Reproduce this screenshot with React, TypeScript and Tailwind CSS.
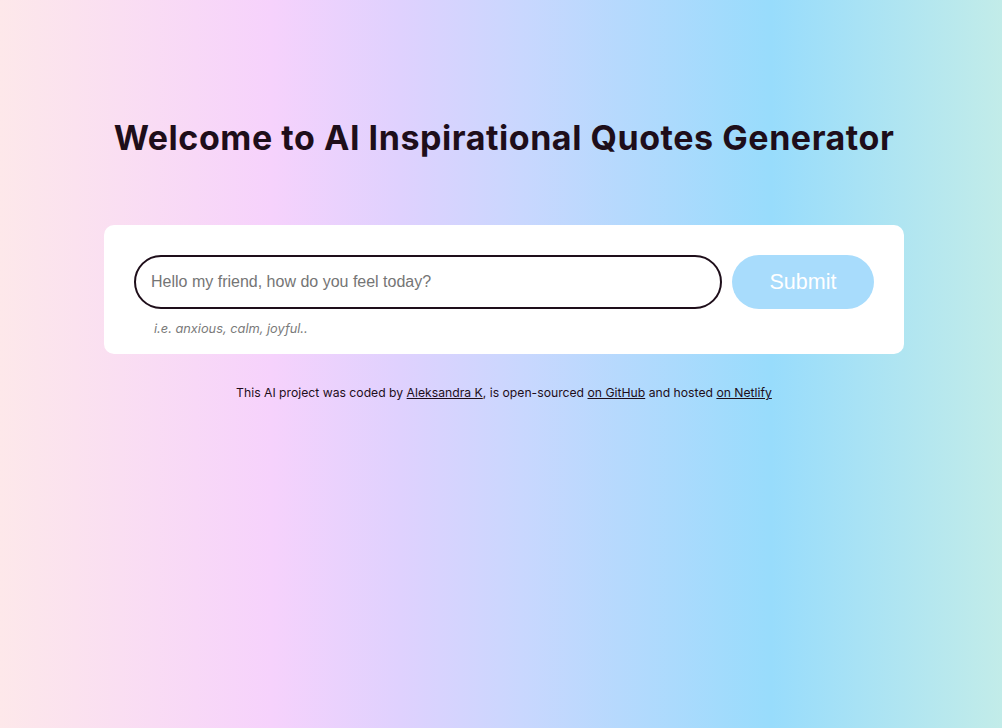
import React from "react";

export default function App() {
  return (
    <div className="min-h-screen w-full bg-[linear-gradient(90deg,#fde8ea_0%,#f6d2fc_27%,#dfd1fe_40%,#c9d7fe_52%,#98dcfc_77%,#c2ece9_100%)] pl-[6px] font-['Inter','Noto_Sans',sans-serif] text-[#1e0e1a]">
      <div className="mx-auto flex w-[800px] flex-col items-center pt-[116px]">
        <h1 className="whitespace-nowrap text-[34px] font-bold leading-[44px] tracking-[0.55px]">
          Welcome to AI Inspirational Quotes Generator
        </h1>

        {/* Form Card */}
        <div className="mt-[65px] w-full rounded-[10px] bg-white px-[30px] pt-[30px] pb-[16px]">
          <form className="flex items-center gap-[10px]" onSubmit={(e) => e.preventDefault()}>
            <input
              type="text"
              placeholder="Hello my friend, how do you feel today?"
              className="h-[54px] flex-1 rounded-full border-2 border-[#1e0e1a] bg-white px-[15px] font-['Liberation_Sans',Arial,sans-serif] text-[16px] text-[#1e0e1a] placeholder:text-[#757575] outline-none"
            />
            <button
              type="submit"
              className="h-[54px] w-[142px] rounded-full bg-[#a8dcfc] font-['Liberation_Sans',Arial,sans-serif] text-[21.5px] text-white"
            >
              Submit
            </button>
          </form>
          <p className="mt-[10px] pl-[20px] text-[12.8px] italic text-[#7a7a7a]">
            i.e. anxious, calm, joyful..
          </p>
        </div>

        <footer className="mt-[30px] text-[12.2px] leading-[18px] text-[#1e0e1a]">
          This AI project was coded by <a href="#" className="underline">Aleksandra K</a>, is open-sourced{" "}
          <a href="#" className="underline">on GitHub</a> and hosted <a href="#" className="underline">on Netlify</a>
        </footer>
      </div>
    </div>
  );
}
